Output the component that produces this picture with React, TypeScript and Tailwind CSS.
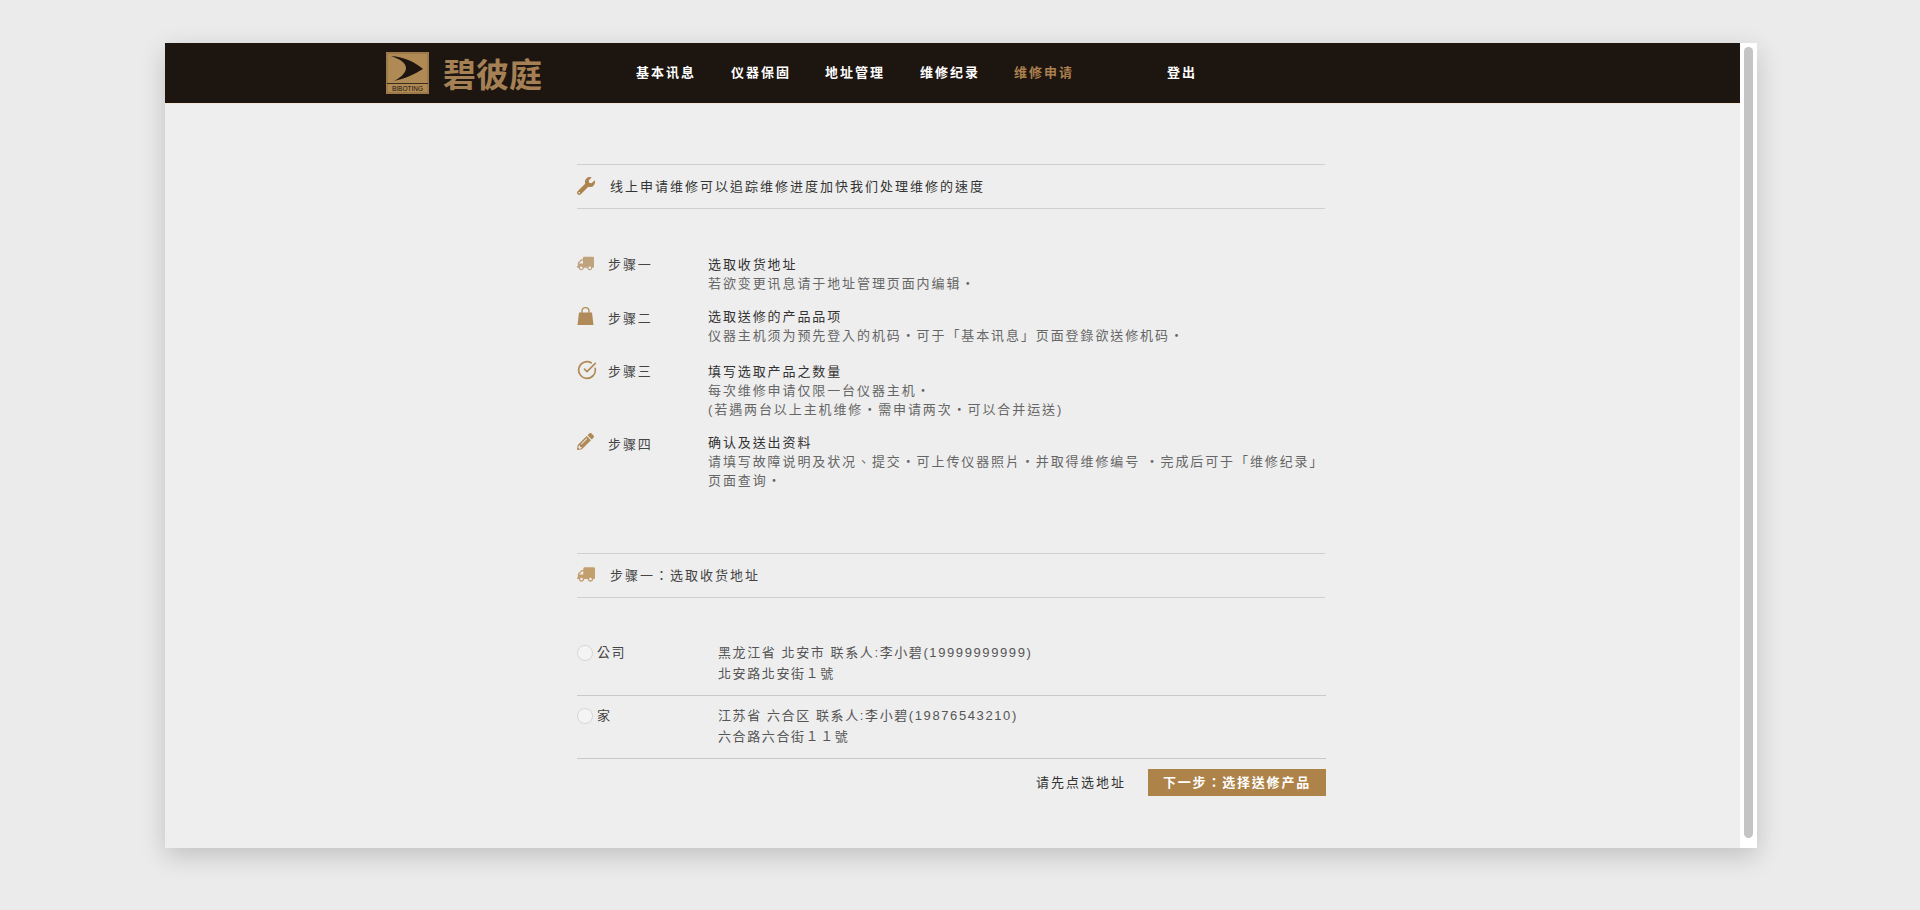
import React from "react";
import { FaWrench, FaTruck, FaPencilAlt } from "react-icons/fa";
import { CircleCheckBig } from "lucide-react";

const font = { fontFamily: '"Liberation Sans", "Noto Sans CJK TC", sans-serif' };

function Logo() {
  return (
    <svg width="43" height="42" viewBox="0 0 43 42" className="shrink-0">
      <rect x="0" y="0" width="43" height="42" fill="#b08a55" />
      <rect x="1" y="1" width="41" height="40" fill="none" stroke="#6f5431" strokeWidth="0.6" />
      <path d="M5 4 C18 5 29 10 37 17 C29 22 18 27 8 29 C16 25 20 20 20 16 C20 11 14 7 5 4 Z" fill="#1d1510" />
      <rect x="1" y="31" width="41" height="0.8" fill="#1d1510" />
      <text x="21.5" y="39" textAnchor="middle" fontSize="6.5" fill="#1d1510" fontFamily="Liberation Sans, sans-serif">BIBOTING</text>
    </svg>
  );
}

function Bag() {
  return (
    <svg width="17" height="18" viewBox="0 0 17 18" fill="currentColor">
      <path d="M2 5.5 H15 L16.5 18 H0.5 Z" />
      <path d="M5 6 V4 C5 1.8 6.5 0.7 8.5 0.7 C10.5 0.7 12 1.8 12 4 V6" fill="none" stroke="currentColor" strokeWidth="1.3" />
    </svg>
  );
}

const nav = [
  { t: "基本讯息", c: "w-[60px] mr-[35px] text-white" },
  { t: "仪器保固", c: "w-[60px] mr-[34px] text-white" },
  { t: "地址管理", c: "w-[60px] mr-[35px] text-white" },
  { t: "维修纪录", c: "w-[60px] mr-[34px] text-white" },
  { t: "维修申请", c: "w-[60px] mr-[93px] text-[#a97f4d]" },
  { t: "登出", c: "w-[30px] text-white" },
];

function Step({ icon, label, title, lines, cls, labelCls }: { icon: React.ReactNode; label: string; title: string; lines: string[]; cls: string; labelCls: string }) {
  return (
    <div className={`flex text-[13px] leading-[19px] tracking-[1.9px] ${cls}`}>
      <div className="w-[30px] shrink-0 text-[#b08a58]">{icon}</div>
      <div className={`w-[101px] shrink-0 text-[#444] pl-[1px] ${labelCls}`}>{label}</div>
      <div className="whitespace-nowrap">
        <div className="text-[#333]">{title}</div>
        {lines.map((l) => (
          <div key={l} className="text-[#666]">{l}</div>
        ))}
      </div>
    </div>
  );
}

function Address({ name, a, b, cls }: { name: string; a: string; b: string; cls: string }) {
  return (
    <div className={`flex text-[13px] leading-[20.5px] tracking-[1.6px] border-b border-[#c9c9c9] ${cls}`}>
      <div className="w-[16px] h-[16px] mt-[2px] rounded-full bg-[#f4f4f4] border border-[#d6d6d6] shrink-0" />
      <div className="w-[125px] pl-[4px] shrink-0 text-[#444]">{name}</div>
      <div className="text-[#555] whitespace-nowrap">
        <div>{a}</div>
        <div>{b}</div>
      </div>
    </div>
  );
}

export default function App() {
  return (
    <div lang="zh-TW" className="w-[1920px] h-[910px] bg-[#ebebeb] overflow-hidden pt-[43px] pl-[165px]" style={font}>
      <div className="w-[1592px] h-[805px] flex bg-white shadow-[0_8px_24px_rgba(0,0,0,0.18)]">
        <div className="w-[1575px] h-full bg-[#eeeeee] flex flex-col">
          <header className="h-[61px] bg-[#1d1510] border-b border-[#f3e6d6] flex items-center pl-[221px] shrink-0">
            <Logo />
            <div className="ml-[14px] w-[193px] text-[33px] leading-[40px] font-bold text-[#a58055] whitespace-nowrap" style={{ fontFamily: '"Noto Sans CJK TC", sans-serif' }}>碧彼庭</div>
            <nav className="flex text-[13px] font-bold tracking-[2px] whitespace-nowrap">
              {nav.map((n) => (
                <span key={n.t} className={n.c}>{n.t}</span>
              ))}
            </nav>
          </header>

          <main className="w-[749px] ml-[412px] pt-[60px]">
            <div className="h-[45px] mr-[1px] border-y border-[#cfcfcf] flex items-center text-[13px] tracking-[2px] text-[#333]">
              <FaWrench className="w-[18px] h-[18px] text-[#ad8450] mr-[15px] -mt-[2px]" />
              <span className="whitespace-nowrap">线上申请维修可以追踪维修进度加快我们处理维修的速度</span>
            </div>

            <Step cls="mt-[46px]" labelCls="" icon={<FaTruck className="w-[17px] h-[15px] -scale-x-100 opacity-75 mt-[1px]" />} label="步骤一" title="选取收货地址" lines={["若欲变更讯息请于地址管理页面内编辑・"]} />
            <Step cls="mt-[14px]" labelCls="pt-[2px]" icon={<Bag />} label="步骤二" title="选取送修的产品品项" lines={["仪器主机须为预先登入的机码・可于「基本讯息」页面登錄欲送修机码・"]} />
            <Step cls="mt-[17px]" labelCls="" icon={<CircleCheckBig className="w-[20px] h-[20px] -mt-[2px]" strokeWidth={2} />} label="步骤三" title="填写选取产品之数量" lines={["每次维修申请仅限一台仪器主机・", "(若遇两台以上主机维修・需申请两次・可以合并运送)"]} />
            <Step cls="mt-[14px]" labelCls="pt-[2px]" icon={<FaPencilAlt className="w-[17px] h-[17px]" />} label="步骤四" title="确认及送出资料" lines={["请填写故障说明及状况、提交・可上传仪器照片・并取得维修编号 ・完成后可于「维修纪录」", "页面查询・"]} />

            <div className="mt-[63px] h-[45px] mr-[1px] border-y border-[#cfcfcf] flex items-center text-[13px] tracking-[2px] text-[#444]">
              <FaTruck className="w-[18px] h-[15px] -scale-x-100 text-[#c49f6e] mr-[15px] -mt-[2px]" />
              <span className="whitespace-nowrap">步骤一：选取收货地址</span>
            </div>

            <Address cls="mt-[45px] h-[53px]" name="公司" a="黑龙江省 北安市 联系人:李小碧(19999999999)" b="北安路北安街１號" />
            <Address cls="pt-[10px] h-[63px]" name="家" a="江苏省 六合区 联系人:李小碧(19876543210)" b="六合路六合街１１號" />

            <div className="flex justify-end items-center mt-[10px]">
              <span className="text-[13px] tracking-[2px] text-[#333] mr-[22px] whitespace-nowrap">请先点选地址</span>
              <button className="w-[178px] h-[27px] bg-[#ad8349] text-white text-[13px] font-bold tracking-[1.8px] whitespace-nowrap">下一步：选择送修产品</button>
            </div>
          </main>
        </div>
        <div className="flex-1 pt-[4px] pb-[10px] pl-[4px] pr-[3px] bg-white">
          <div className="w-[9px] h-full rounded-full bg-[#c4c4c4]" />
        </div>
      </div>
    </div>
  );
}
